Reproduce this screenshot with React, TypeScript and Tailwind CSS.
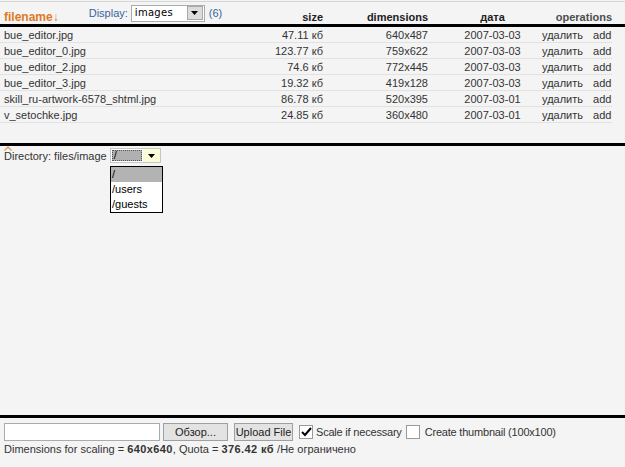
import React from "react";

const files = [
  { name: "bue_editor.jpg", size: "47.11 кб", dims: "640x487", date: "2007-03-03" },
  { name: "bue_editor_0.jpg", size: "123.77 кб", dims: "759x622", date: "2007-03-03" },
  { name: "bue_editor_2.jpg", size: "74.6 кб", dims: "772x445", date: "2007-03-03" },
  { name: "bue_editor_3.jpg", size: "19.32 кб", dims: "419x128", date: "2007-03-03" },
  { name: "skill_ru-artwork-6578_shtml.jpg", size: "86.78 кб", dims: "520x395", date: "2007-03-01" },
  { name: "v_setochke.jpg", size: "24.85 кб", dims: "360x480", date: "2007-03-01" },
];

function ArrowBox({ yellow }: { yellow?: boolean }) {
  return (
    <div
      className={
        yellow
          ? "flex h-full w-[17px] items-center justify-center bg-[#fbfbd8]"
          : "flex h-[14px] w-[16px] items-center justify-center border border-[#a9a9a9] bg-[#dcdcdc]"
      }
    >
      <svg width="7" height="4" viewBox="0 0 7 4">
        <path d="M0 0h7L3.5 4z" fill="#000" />
      </svg>
    </div>
  );
}

function FileRow({ file }: { file: (typeof files)[number] }) {
  return (
    <div className="flex h-[16px] w-[612px] border-b border-[#e2e2e2] pt-[3px] text-[#333]">
      <div className="w-[250px] pl-[4px]">{file.name}</div>
      <div className="w-[73px] text-right">{file.size}</div>
      <div className="w-[120px] pr-[15px] text-right">{file.dims}</div>
      <div className="w-[99px] text-center">{file.date}</div>
      <div className="flex flex-1 gap-[10px] whitespace-nowrap">
        <span>удалить</span>
        <span>add</span>
      </div>
    </div>
  );
}

export default function App() {
  return (
    <div className="h-[467px] w-[625px] overflow-hidden bg-[#f4f4f4] font-['Liberation_Sans',sans-serif] text-[11px] leading-none text-[#222]">
      <div className="h-[2px] border-b border-[#d6d6d6]" />
      <div className="flex h-[22px] w-[612px] items-center">
        <div className="flex w-[250px] items-center pl-[4px]">
          <span className="pt-[8px] text-[12px] font-bold text-[#e07a1e]">filename↓</span>
          <span className="ml-[30px] text-[#35659c]">Display:</span>
          <div className="ml-[3px] flex h-[17px] w-[74px] items-center justify-between border border-[#a5acb2] bg-white pl-[3px] pr-[1px]">
            <span className="font-['DejaVu_Sans',sans-serif] text-[10px] tracking-[0.3px] text-black">images</span>
            <ArrowBox />
          </div>
          <span className="ml-[4px] text-[#35659c]">(6)</span>
        </div>
        <div className="w-[73px] pt-[9px] text-right font-bold">size</div>
        <div className="w-[120px] pt-[9px] pr-[15px] text-right font-bold">dimensions</div>
        <div className="w-[99px] pt-[9px] text-center font-bold">дата</div>
        <div className="flex-1 pt-[9px] text-right font-bold text-[#4d4d4d]">operations</div>
      </div>
      <div className="h-[3px] bg-black" />
      <div className="h-[116px]">
        {files.map((f) => (
          <FileRow key={f.name} file={f} />
        ))}
      </div>
      <div className="h-[3px] bg-black" />
      <div className="relative h-[269px]">
        <svg className="absolute left-[4px] top-[0px]" width="8" height="5" viewBox="0 0 8 5">
          <path d="M0.5 4.5L4 1l3.5 3.5" fill="none" stroke="#e0953a" strokeWidth="1.2" />
        </svg>
        <div className="flex items-center pl-[4px] pt-[2px]">
          <span className="pt-[1px] text-[#333]">Directory: files/image</span>
          <div className="ml-[3px] flex h-[15px] w-[51px] items-stretch border border-[#c6c6c6] bg-white">
            <div className="m-[1px] flex flex-1 items-center border border-dotted border-[#555] bg-[#b0b0b0] pl-[1px] text-black">/</div>
            <ArrowBox yellow />
          </div>
        </div>
        <div className="absolute left-[110px] top-[20px] w-[53px] border border-black bg-white text-black">
          <div className="flex h-[15px] items-center bg-[#b3b3b3] pl-[1px]">/</div>
          <div className="flex h-[15px] items-center pl-[1px]">/users</div>
          <div className="flex h-[15px] items-center pl-[1px]">/guests</div>
        </div>
      </div>
      <div className="h-[3px] bg-black" />
      <div className="flex items-center gap-[3px] pl-[4px] pt-[5px]">
        <div className="h-[18px] w-[156px] border border-[#a5acb2] bg-white" />
        <button className="h-[18px] w-[65px] border border-[#a0a0a0] bg-[#e3e3e3] text-[#222]">Обзор...</button>
        <button className="ml-[3px] h-[18px] w-[59px] border border-[#a0a0a0] bg-[#e3e3e3] text-[#222]">Upload File</button>
        <div className="ml-[3px] flex h-[14px] w-[14px] items-center justify-center border border-[#9a9a9a] bg-white">
          <svg width="11" height="10" viewBox="0 0 11 10">
            <path d="M1 5l3 3 6-7" fill="none" stroke="#000" strokeWidth="2" />
          </svg>
        </div>
        <span className="tracking-[-0.2px] text-[#333]">Scale if necessary</span>
        <div className="ml-[1px] h-[14px] w-[14px] border border-[#9a9a9a] bg-white" />
        <span className="ml-[2px] tracking-[-0.2px] text-[#333]">Create thumbnail (100x100)</span>
      </div>
      <div className="pl-[4px] pt-[3px] text-[#333]">
        Dimensions for scaling = <b className="tracking-[0.4px]">640x640</b>, Quota = <b className="tracking-[0.4px]">376.42 кб</b> /Не ограничено
      </div>
    </div>
  );
}
